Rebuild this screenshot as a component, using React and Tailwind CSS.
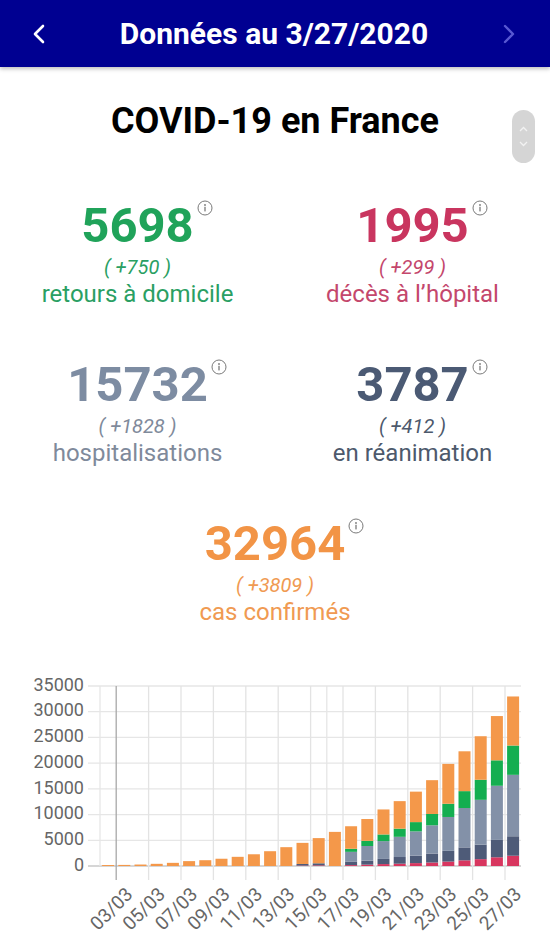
import React from 'react';

const days = [
  '02/03', '03/03', '04/03', '05/03', '06/03', '07/03', '08/03', '09/03', '10/03', '11/03', '12/03', '13/03', '14/03',
  '15/03', '16/03', '17/03', '18/03', '19/03', '20/03', '21/03', '22/03', '23/03', '24/03', '25/03', '26/03', '27/03',
];
const pad = (n, a) => Array(n).fill(0).concat(a);
const confirmed = [191, 212, 285, 423, 613, 949, 1126, 1412, 1784, 2281, 2876, 3661, 4499, 5423, 6633, 7730, 9134, 10995, 12612, 14459, 16689, 19856, 22304, 25233, 29155, 32964];
const deaths = pad(12, [91, 127, 0, 175, 264, 372, 450, 562, 674, 860, 1100, 1331, 1696, 1995]);
const rea = pad(12, [300, 400, 0, 699, 771, 1002, 1297, 1453, 1746, 2082, 2516, 2827, 3375, 3787]);
const hosp = pad(12, [300, 400, 0, 2579, 3626, 4461, 5226, 6172, 7240, 8673, 10176, 11539, 13904, 15732]);
const gueris = pad(12, [0, 0, 0, 602, 1000, 1300, 1587, 1800, 2200, 2567, 3281, 3900, 4948, 5698]);

const stats = [
  { value: '5698', delta: '( +750 )', label: 'retours à domicile', num: 'text-[#20a35a]', txt: 'text-[#2a9f63]' },
  { value: '1995', delta: '( +299 )', label: 'décès à l’hôpital', num: 'text-[#c9355f]', txt: 'text-[#c4476c]' },
  { value: '15732', delta: '( +1828 )', label: 'hospitalisations', num: 'text-[#7d8ca2]', txt: 'text-[#7f8a9b]' },
  { value: '3787', delta: '( +412 )', label: 'en réanimation', num: 'text-[#4b5a74]', txt: 'text-[#4d596c]' },
];

function InfoIcon() {
  return (
    <svg className="absolute left-full top-[-1px] ml-[3px]" width="16" height="16" viewBox="0 0 16 16">
      <circle cx="8" cy="8" r="7" fill="none" stroke="#7a7a7a" strokeWidth="1" />
      <circle cx="8" cy="5" r="0.9" fill="#7a7a7a" />
      <rect x="7.35" y="6.8" width="1.3" height="4.6" fill="#7a7a7a" />
    </svg>
  );
}

function Stat({ s }) {
  return (
    <div className="flex flex-col items-center">
      <span className={`relative text-[49px] leading-[50px] font-bold ${s.num}`}>
        {s.value}
        <InfoIcon />
      </span>
      <span className={`mt-[4px] text-[20px] leading-[24px] italic ${s.txt}`}>{s.delta}</span>
      <span className={`text-[24px] leading-[30px] ${s.txt}`}>{s.label}</span>
    </div>
  );
}

function Chart() {
  const x0 = 100;
  const slot = 16.2;
  const y0 = 217;
  const k = 180 / 35000;
  const yv = (v) => y0 - v * k;
  const ticks = [0, 5000, 10000, 15000, 20000, 25000, 30000, 35000];
  const vlines = [];
  for (let i = 1; i < 26; i += 2) vlines.push(i);

  return (
    <svg width="550" height="291" viewBox="0 0 550 291" className="block">
      {ticks.map((t) => (
        <line key={t} x1="88" x2="521" y1={yv(t)} y2={yv(t)} stroke={t === 0 ? '#c8c8c8' : '#e6e6e6'} strokeWidth="1.3" />
      ))}
      <line x1={x0} x2={x0} y1={yv(35000)} y2={y0} stroke="#e6e6e6" strokeWidth="1.3" />
      <line x1={x0 + slot * 14} x2={x0 + slot * 14} y1={yv(35000)} y2={y0} stroke="#e6e6e6" strokeWidth="1.3" />
      {vlines.map((i) => (
        <line
          key={i}
          x1={x0 + slot * i}
          x2={x0 + slot * i}
          y1={yv(35000)}
          y2={231}
          stroke={i === 1 ? '#a8a8a8' : '#e3e3e3'}
          strokeWidth="1.3"
        />
      ))}
      {ticks.map((t) => (
        <text key={t} x="84" y={yv(t)} textAnchor="end" dominantBaseline="middle" fontSize="18" fill="#666" fontFamily="Roboto, sans-serif">
          {t}
        </text>
      ))}
      {days.map((d, i) => {
        const cx = x0 + slot * (i + 0.5);
        const bx = cx - 6;
        const segs = [
          { v: deaths[i], c: '#d8365f' },
          { v: rea[i], c: '#4e5b78' },
          { v: hosp[i] - rea[i], c: '#8391a8' },
          { v: gueris[i], c: '#14ae50' },
        ];
        let cum = 0;
        const rects = [];
        segs.forEach((s, j) => {
          if (s.v > 0) {
            rects.push(<rect key={j} x={bx} width="12" y={yv(cum + s.v)} height={s.v * k} fill={s.c} />);
          }
          cum += s.v;
        });
        const rest = confirmed[i] - cum;
        rects.push(<rect key="o" x={bx} width="12" y={yv(confirmed[i])} height={rest * k} fill="#f4984a" />);
        return <g key={d}>{rects}</g>;
      })}
      {days.map((d, i) => {
        if (i % 2 === 0) return null;
        const ax = x0 + slot * (i + 0.5) + 6;
        const ay = 243;
        return (
          <text
            key={d}
            x={ax}
            y={ay}
            textAnchor="end"
            dominantBaseline="middle"
            fontSize="19"
            fill="#666"
            fontFamily="Roboto, sans-serif"
            transform={`rotate(-45 ${ax} ${ay})`}
          >
            {d}
          </text>
        );
      })}
    </svg>
  );
}

export default function App() {
  return (
    <div className="relative w-[550px] min-h-[941px] bg-white font-['Roboto',sans-serif] overflow-hidden">
      <div className="h-[67px] bg-[#000091] flex items-center justify-between px-[32px] shadow-[0_2px_4px_rgba(0,0,0,0.25)]">
        <svg width="13" height="20" viewBox="0 0 13 20">
          <polyline points="11,2 3,10 11,18" fill="none" stroke="#fff" strokeWidth="2.6" strokeLinecap="round" strokeLinejoin="round" />
        </svg>
        <h1 className="text-white text-[30px] font-bold leading-none">Données au 3/27/2020</h1>
        <svg width="13" height="20" viewBox="0 0 13 20" className="mr-[2px]">
          <polyline points="2,2 10,10 2,18" fill="none" stroke="#5858d2" strokeWidth="2.4" strokeLinecap="round" strokeLinejoin="round" />
        </svg>
      </div>

      <div className="absolute right-[15px] top-[110px] w-[23px] h-[53px] rounded-full bg-[#d5d5d5] flex flex-col items-center justify-center gap-[9px]">
        <svg width="9" height="6" viewBox="0 0 9 6">
          <polyline points="1,5 4.5,1.5 8,5" fill="none" stroke="#f2f2f2" strokeWidth="1.3" />
        </svg>
        <svg width="9" height="6" viewBox="0 0 9 6">
          <polyline points="1,1 4.5,4.5 8,1" fill="none" stroke="#f2f2f2" strokeWidth="1.3" />
        </svg>
      </div>

      <h2 className="mt-[34px] text-center text-[36px] leading-[40px] font-bold text-black">COVID-19 en France</h2>

      <div className="mt-[60px] grid grid-cols-2 gap-y-[51px]">
        {stats.map((s) => (
          <Stat key={s.value} s={s} />
        ))}
        <div className="col-span-2">
          <Stat s={{ value: '32964', delta: '( +3809 )', label: 'cas confirmés', num: 'text-[#f29446]', txt: 'text-[#f09a52]' }} />
        </div>
      </div>

      <div className="mt-[22px]">
        <Chart />
      </div>
    </div>
  );
}
